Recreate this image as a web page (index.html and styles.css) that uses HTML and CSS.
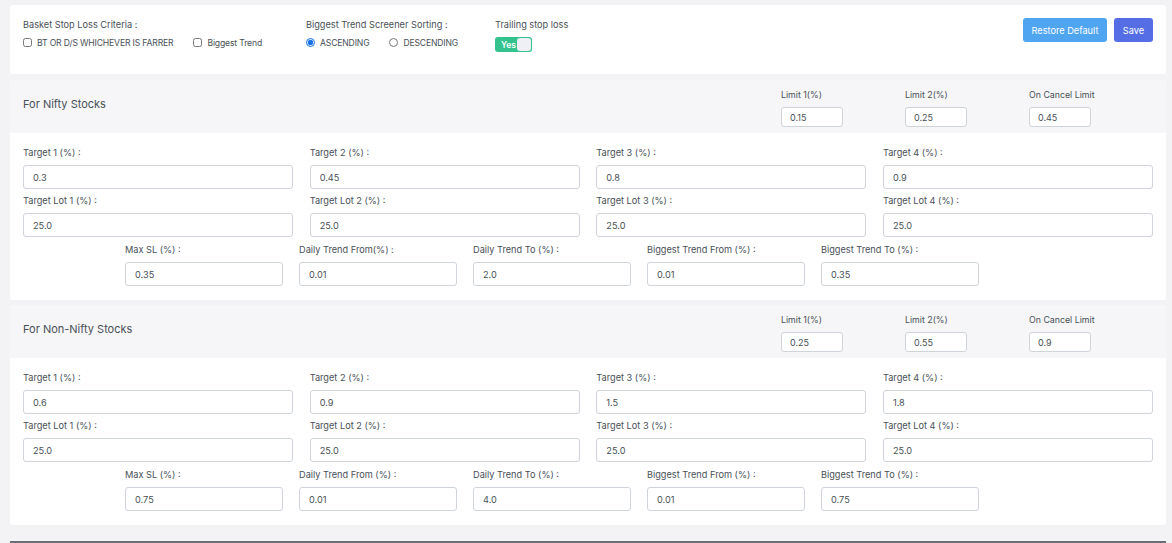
FILE: index.html
```html
<!DOCTYPE html>
<html>
<head>
<meta charset="utf-8">
<link rel="stylesheet" href="styles.css">
</head>
<body>
<div class="page">
  <div class="card top-card">
    <div class="grp grp-basket">
      <div class="lbl">Basket Stop Loss Criteria :</div>
      <div class="opts">
        <label class="opt"><input type="checkbox"><span>BT OR D/S WHICHEVER IS FARRER</span></label>
        <label class="opt opt-gap"><input type="checkbox"><span>Biggest Trend</span></label>
      </div>
    </div>
    <div class="grp grp-sort">
      <div class="lbl">Biggest Trend Screener Sorting :</div>
      <div class="opts">
        <label class="opt"><input type="radio" name="sort" checked><span>ASCENDING</span></label>
        <label class="opt opt-gap"><input type="radio" name="sort"><span>DESCENDING</span></label>
      </div>
    </div>
    <div class="grp grp-trail">
      <div class="lbl">Trailing stop loss</div>
      <div class="toggle"><span class="toggle-txt">Yes</span><span class="knob"></span></div>
    </div>
    <div class="btns">
      <button class="btn btn-info">Restore Default</button>
      <button class="btn btn-primary">Save</button>
    </div>
  </div>

  <div class="card section">
    <div class="sec-head">
      <div class="sec-title">For Nifty Stocks</div>
      <div class="limits">
        <div class="limit"><div class="lbl">Limit 1(%)</div><input class="inp-sm" value="0.15"></div>
        <div class="limit"><div class="lbl">Limit 2(%)</div><input class="inp-sm" value="0.25"></div>
        <div class="limit"><div class="lbl">On Cancel Limit</div><input class="inp-sm" value="0.45"></div>
      </div>
    </div>
    <div class="sec-body">
      <div class="grid4">
        <div class="field"><div class="lbl">Target 1 (%) :</div><input class="inp" value="0.3"></div>
        <div class="field"><div class="lbl">Target 2 (%) :</div><input class="inp" value="0.45"></div>
        <div class="field"><div class="lbl">Target 3 (%) :</div><input class="inp" value="0.8"></div>
        <div class="field"><div class="lbl">Target 4 (%) :</div><input class="inp" value="0.9"></div>
        <div class="field"><div class="lbl">Target Lot 1 (%) :</div><input class="inp" value="25.0"></div>
        <div class="field"><div class="lbl">Target Lot 2 (%) :</div><input class="inp" value="25.0"></div>
        <div class="field"><div class="lbl">Target Lot 3 (%) :</div><input class="inp" value="25.0"></div>
        <div class="field"><div class="lbl">Target Lot 4 (%) :</div><input class="inp" value="25.0"></div>
      </div>
      <div class="grid5">
        <div class="field"><div class="lbl">Max SL (%) :</div><input class="inp" value="0.35"></div>
        <div class="field"><div class="lbl">Daily Trend From(%) :</div><input class="inp" value="0.01"></div>
        <div class="field"><div class="lbl">Daily Trend To (%) :</div><input class="inp" value="2.0"></div>
        <div class="field"><div class="lbl">Biggest Trend From (%) :</div><input class="inp" value="0.01"></div>
        <div class="field"><div class="lbl">Biggest Trend To (%) :</div><input class="inp" value="0.35"></div>
      </div>
    </div>
  </div>

  <div class="card section">
    <div class="sec-head">
      <div class="sec-title">For Non-Nifty Stocks</div>
      <div class="limits">
        <div class="limit"><div class="lbl">Limit 1(%)</div><input class="inp-sm" value="0.25"></div>
        <div class="limit"><div class="lbl">Limit 2(%)</div><input class="inp-sm" value="0.55"></div>
        <div class="limit"><div class="lbl">On Cancel Limit</div><input class="inp-sm" value="0.9"></div>
      </div>
    </div>
    <div class="sec-body">
      <div class="grid4">
        <div class="field"><div class="lbl">Target 1 (%) :</div><input class="inp" value="0.6"></div>
        <div class="field"><div class="lbl">Target 2 (%) :</div><input class="inp" value="0.9"></div>
        <div class="field"><div class="lbl">Target 3 (%) :</div><input class="inp" value="1.5"></div>
        <div class="field"><div class="lbl">Target 4 (%) :</div><input class="inp" value="1.8"></div>
        <div class="field"><div class="lbl">Target Lot 1 (%) :</div><input class="inp" value="25.0"></div>
        <div class="field"><div class="lbl">Target Lot 2 (%) :</div><input class="inp" value="25.0"></div>
        <div class="field"><div class="lbl">Target Lot 3 (%) :</div><input class="inp" value="25.0"></div>
        <div class="field"><div class="lbl">Target Lot 4 (%) :</div><input class="inp" value="25.0"></div>
      </div>
      <div class="grid5">
        <div class="field"><div class="lbl">Max SL (%) :</div><input class="inp" value="0.75"></div>
        <div class="field"><div class="lbl">Daily Trend From (%) :</div><input class="inp" value="0.01"></div>
        <div class="field"><div class="lbl">Daily Trend To (%) :</div><input class="inp" value="4.0"></div>
        <div class="field"><div class="lbl">Biggest Trend From (%) :</div><input class="inp" value="0.01"></div>
        <div class="field"><div class="lbl">Biggest Trend To (%) :</div><input class="inp" value="0.75"></div>
      </div>
    </div>
  </div>

  <div class="footer-bar"></div>
</div>
</body>
</html>
```

FILE: styles.css
```css
* { box-sizing: border-box; }
html, body { margin: 0; padding: 0; }
body {
  background: #f3f3f6;
  font-family: "Inter", "Open Sans", sans-serif;
  color: #495057;
  font-size: 9.2px;
  overflow: hidden;
}
.page {
  width: 1172px;
  height: 543px;
  padding: 5px 6px 0 10px;
}
.card {
  background: #fff;
  border-radius: 3px;
  width: 1156px;
}
.lbl {
  font-size: 9.2px;
  line-height: 13px;
  color: #495057;
  white-space: nowrap;
}

/* top card */
.top-card {
  height: 69px;
  display: flex;
  padding: 13px 13px 0 13px;
}
.grp-basket { width: 283px; }
.grp-sort { width: 189px; }
.grp-trail { width: 120px; }
.opts {
  display: flex;
  align-items: center;
  margin-top: 5px;
  height: 13px;
}
.opt {
  display: flex;
  align-items: center;
  font-size: 8.6px;
  letter-spacing: -0.15px;
  color: #495057;
  white-space: nowrap;
}
.opt input {
  margin: 0 5px 0 0;
  width: 9px;
  height: 9px;
  accent-color: #1a73e8;
}
.opt-gap { margin-left: 20px; }
.toggle {
  margin-top: 6px;
  width: 37px;
  height: 15px;
  background: #34c38f;
  border-radius: 3px;
  display: flex;
  align-items: center;
  padding: 0 1px 0 6px;
}
.toggle-txt {
  color: #fff;
  font-size: 8.5px;
  font-weight: 600;
  flex: 1;
}
.knob {
  width: 14px;
  height: 13px;
  background: #eef0f5;
  border-radius: 3px;
}
.btns {
  margin-left: auto;
  display: flex;
  gap: 7px;
  padding-top: 0;
}
.btn {
  height: 24px;
  border: none;
  border-radius: 3px;
  color: #fff;
  font-family: inherit;
  font-size: 9.2px;
  padding: 0;
  white-space: nowrap;
}
.btn-info { background: #50a5f1; width: 84px; }
.btn-primary { background: #556ee6; width: 39px; }

/* sections */
.section { margin-top: 6px; overflow: hidden; }
.section + .section { margin-top: 5px; }
.sec-head {
  background: #f6f6f8;
  height: 53px;
  display: flex;
  align-items: center;
  padding: 0 13px;
}
.sec-title {
  font-size: 11px;
  color: #495057;
  margin-top: -5px;
}
.limits {
  margin-left: auto;
  margin-right: 62px;
  display: flex;
  gap: 62px;
  padding-top: 2px;
}
.limit { width: 62px; }
.limit .lbl { font-size: 8.8px; }
.inp-sm {
  display: block;
  margin-top: 6px;
  width: 62px;
  height: 20px;
  border: 1px solid #ced4da;
  border-radius: 3px;
  padding: 0 8px;
  font-family: inherit;
  font-size: 9px;
  color: #495057;
  outline: none;
}
.sec-body {
  height: 167px;
  padding: 13px 13px 0 13px;
}
.grid4 {
  display: grid;
  grid-template-columns: repeat(4, 1fr);
  column-gap: 16.6px;
  row-gap: 5px;
}
.grid5 {
  display: grid;
  grid-template-columns: repeat(5, 158px);
  column-gap: 16px;
  margin-left: 102px;
  margin-top: 6px;
}
.field .lbl { margin-bottom: 6px; }
.inp {
  display: block;
  width: 100%;
  height: 24px;
  border: 1px solid #ced4da;
  border-radius: 3px;
  padding: 0 9px;
  font-family: inherit;
  font-size: 9.2px;
  color: #495057;
  outline: none;
}
.footer-bar {
  margin-top: 16px;
  width: 1156px;
  height: 2px;
  background: #6b6e76;
}
```
